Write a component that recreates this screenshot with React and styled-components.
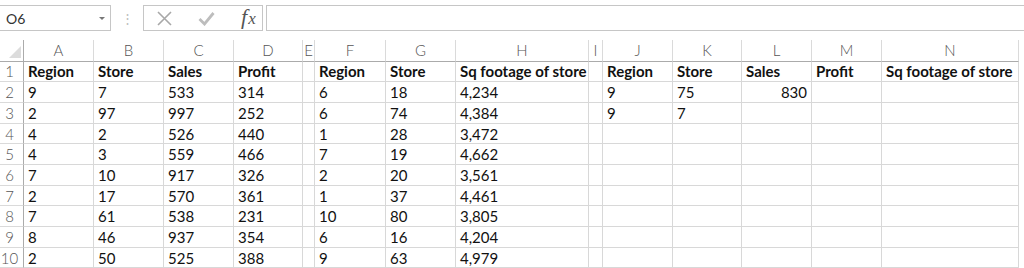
import React from 'react';
import styled, { createGlobalStyle } from 'styled-components';

const GlobalStyle = createGlobalStyle`
  html, body { margin: 0; padding: 0; background: #ffffff; }
  body { font-family: Lato, "Liberation Sans", sans-serif; }
`;

const columns = [
  { key: 'A', width: 70 },
  { key: 'B', width: 70 },
  { key: 'C', width: 70 },
  { key: 'D', width: 69 },
  { key: 'E', width: 12 },
  { key: 'F', width: 71 },
  { key: 'G', width: 70 },
  { key: 'H', width: 133 },
  { key: 'I', width: 14 },
  { key: 'J', width: 70 },
  { key: 'K', width: 69 },
  { key: 'L', width: 70 },
  { key: 'M', width: 70 },
  { key: 'N', width: 137 },
];

const header = ['Region', 'Store', 'Sales', 'Profit', '', 'Region', 'Store', 'Sq footage of store', '', 'Region', 'Store', 'Sales', 'Profit', 'Sq footage of store'];

const data = [
  ['9', '7', '533', '314', '', '6', '18', '4,234', '', '9', '75', '830', '', ''],
  ['2', '97', '997', '252', '', '6', '74', '4,384', '', '9', '7', '', '', ''],
  ['4', '2', '526', '440', '', '1', '28', '3,472', '', '', '', '', '', ''],
  ['4', '3', '559', '466', '', '7', '19', '4,662', '', '', '', '', '', ''],
  ['7', '10', '917', '326', '', '2', '20', '3,561', '', '', '', '', '', ''],
  ['2', '17', '570', '361', '', '1', '37', '4,461', '', '', '', '', '', ''],
  ['7', '61', '538', '231', '', '10', '80', '3,805', '', '', '', '', '', ''],
  ['8', '46', '937', '354', '', '6', '16', '4,204', '', '', '', '', '', ''],
  ['2', '50', '525', '388', '', '9', '63', '4,979', '', '', '', '', '', ''],
];

export default function App() {
  return (
    <Page>
      <GlobalStyle />
      <FormulaBar>
        <NameBox>
          <span>O6</span>
          <DropArrow />
        </NameBox>
        <Grip>⋮</Grip>
        <ButtonBox>
          <svg width="15" height="15" viewBox="0 0 15 15">
            <path d="M1 1 L14 14 M14 1 L1 14" stroke="#a8a8a8" strokeWidth="1.6" fill="none" />
          </svg>
          <svg width="17" height="15" viewBox="0 0 17 15">
            <path d="M1.5 8 L6.5 13 L15.5 2" stroke="#bdbdbd" strokeWidth="2.8" fill="none" />
          </svg>
          <Fx>f<i>x</i></Fx>
        </ButtonBox>
        <FormulaInput />
      </FormulaBar>

      <Sheet>
        <Corner>
          <svg width="12" height="12" viewBox="0 0 12 12">
            <path d="M12 0 L12 12 L0 12 Z" fill="#dcdcdc" />
          </svg>
        </Corner>
        {columns.map((c) => (
          <ColHead key={c.key}>{c.key}</ColHead>
        ))}
        <Filler />

        <RowHead>1</RowHead>
        {header.map((h, i) => (
          <Cell key={i} $bold>{h}</Cell>
        ))}
        <Filler />

        {data.map((row, r) => (
          <React.Fragment key={r}>
            <RowHead>{r + 2}</RowHead>
            {row.map((v, i) => (
              <Cell key={i} $right={columns[i].key === 'L'}>{v}</Cell>
            ))}
            <Filler />
          </React.Fragment>
        ))}
      </Sheet>
    </Page>
  );
}

const Page = styled.div`
  width: 1024px;
  height: 268px;
  overflow: hidden;
  background: #ffffff;
`;

const FormulaBar = styled.div`
  display: flex;
  align-items: center;
  height: 40px;
  box-sizing: border-box;
`;

const NameBox = styled.div`
  display: flex;
  align-items: center;
  justify-content: space-between;
  width: 111px;
  height: 26px;
  margin-top: -4px;
  box-sizing: border-box;
  border: 1px solid #c6c6c6;
  border-left: none;
  padding: 0 5px 0 6px;
  font-size: 14px;
  color: #333;
`;

const DropArrow = styled.span`
  width: 0;
  height: 0;
  border-left: 3px solid transparent;
  border-right: 3px solid transparent;
  border-top: 3px solid #777;
  margin-top: 1px;
`;

const Grip = styled.div`
  width: 32px;
  text-align: center;
  color: #bdbdbd;
  font-size: 13px;
  margin-top: -4px;
`;

const ButtonBox = styled.div`
  display: flex;
  align-items: center;
  width: 120px;
  height: 26px;
  margin-top: -4px;
  box-sizing: border-box;
  border: 1px solid #c6c6c6;
  padding: 0 0 0 13px;
  gap: 26px;
`;

const Fx = styled.span`
  display: flex;
  align-items: baseline;
  font-family: "Liberation Serif", serif;
  font-style: italic;
  font-size: 22px;
  line-height: 1;
  color: #555;
  margin-left: 0;
  margin-top: -3px;
  i {
    font-size: 17px;
    margin-left: 1px;
  }
`;

const FormulaInput = styled.div`
  flex: 1;
  height: 26px;
  margin-top: -4px;
  margin-left: 3px;
  box-sizing: border-box;
  border: 1px solid #c6c6c6;
  border-right: none;
`;

const Sheet = styled.div`
  display: grid;
  grid-template-columns: 24px ${columns.map((c) => c.width + 'px').join(' ')} 1fr;
  grid-template-rows: 21.6px repeat(10, 20.7px);
  font-size: 15px;
`;

const Corner = styled.div`
  display: flex;
  align-items: flex-end;
  justify-content: flex-end;
  padding: 0 2px 3px 0;
  border-right: 1px solid #ababab;
  border-bottom: 1px solid #ababab;
  box-sizing: border-box;
`;

const ColHead = styled.div`
  display: flex;
  align-items: center;
  justify-content: center;
  box-sizing: border-box;
  border-right: 1px solid #dadada;
  border-bottom: 1px solid #ababab;
  color: #555;
  font-weight: 300;
  font-size: 15px;
  overflow: hidden;
`;

const RowHead = styled.div`
  display: flex;
  align-items: center;
  justify-content: center;
  padding-right: 4px;
  box-sizing: border-box;
  border-right: 1px solid #ababab;
  border-bottom: 1px solid #dadada;
  color: #555;
  font-weight: 300;
  font-size: 15px;
`;

const Cell = styled.div`
  display: flex;
  align-items: center;
  justify-content: ${(p) => (p.$right ? 'flex-end' : 'flex-start')};
  padding: 0 4px;
  box-sizing: border-box;
  border-right: 1px solid #d8d8d8;
  border-bottom: 1px solid #d8d8d8;
  color: #111;
  font-weight: ${(p) => (p.$bold ? 700 : 400)};
  white-space: nowrap;
  overflow: visible;
`;

const Filler = styled.div`
  border-bottom: 1px solid #ffffff;
`;
